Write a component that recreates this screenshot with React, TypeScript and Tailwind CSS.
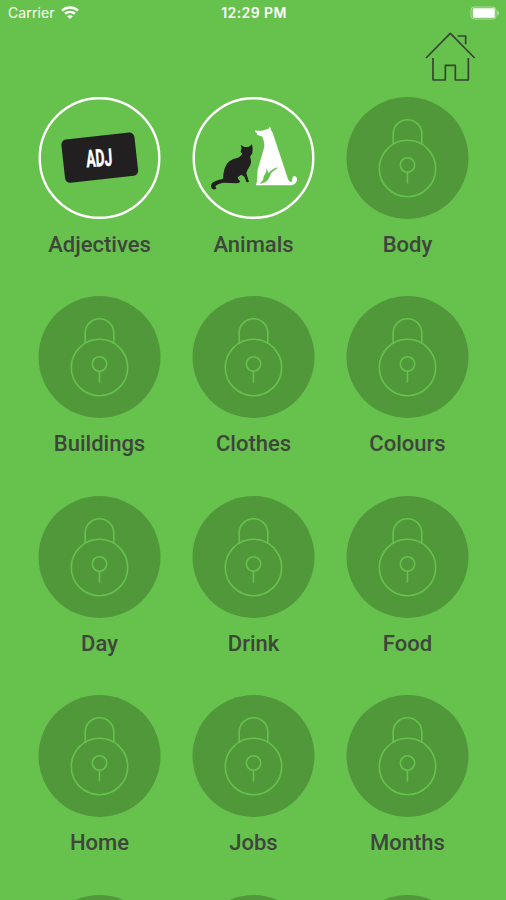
import type { ReactNode } from "react"

type Category = { id: number; name?: string; icon?: ReactNode }

const categories: Category[] = [
  { id: 1, name: "Adjectives", icon: <AdjectivesArt /> },
  { id: 2, name: "Animals", icon: <AnimalsArt /> },
  { id: 3, name: "Body" },
  { id: 4, name: "Buildings" },
  { id: 5, name: "Clothes" },
  { id: 6, name: "Colours" },
  { id: 7, name: "Day" },
  { id: 8, name: "Drink" },
  { id: 9, name: "Food" },
  { id: 10, name: "Home" },
  { id: 11, name: "Jobs" },
  { id: 12, name: "Months" },
  { id: 13 },
  { id: 14 },
  { id: 15 },
]

export default function App() {
  return (
    <div className="w-full h-screen overflow-hidden flex flex-col bg-[#66c24c] font-['Roboto',sans-serif]">
      <StatusBar />
      <header className="h-[71px] shrink-0 flex justify-end pr-[28px] pt-[4px]">
        <button aria-label="Home" className="w-[54px] h-[54px]">
          <HomeIcon />
        </button>
      </header>
      <main className="grid grid-cols-3 auto-rows-[199.4px] px-[22px]">
        {categories.map((c) => (
          <Tile key={c.id} category={c} />
        ))}
      </main>
    </div>
  )
}

function StatusBar() {
  return (
    <div className="h-[26px] shrink-0 grid grid-cols-3 items-center pl-[8px] pr-[6px] text-white font-['Inter',sans-serif] text-[14px] leading-none">
      <div className="flex items-center gap-[6px]">
        <span className="tracking-[0.1px]">Carrier</span>
        <svg viewBox="0 0 18 13" className="w-[18px] h-[13px] -mt-[2px]" fill="none" stroke="currentColor" strokeWidth="2.5">
          <path d="M1 4.6C5.6.5 12.4.5 17 4.6" />
          <path d="M4 7.8c2.9-2.5 7.1-2.5 10 0" />
          <path d="M6.2 10.2c1.6-1.4 4-1.4 5.6 0L9 13z" fill="currentColor" stroke="none" />
        </svg>
      </div>
      <span className="text-center font-semibold tracking-[0.4px] whitespace-nowrap">12:29 PM</span>
      <svg viewBox="0 0 30 14" className="w-[30px] h-[14px] justify-self-end">
        <rect x="1" y="1" width="25" height="12" rx="3" fill="none" stroke="#fff" strokeOpacity="0.45" />
        <rect x="2.8" y="2.3" width="22" height="9.4" rx="1" fill="#fff" />
        <path d="M27.3 4.6v5c1-.5 1.8-1.3 1.8-2.5s-.8-2-1.8-2.5z" fill="#fff" fillOpacity="0.5" />
      </svg>
    </div>
  )
}

function Tile({ category }: { category: Category }) {
  return (
    <button className="flex flex-col items-center">
      <div className="w-[123px] h-[122px] shrink-0">{category.icon ?? <LockIcon />}</div>
      {category.name && (
        <span className="mt-[12px] pl-px text-[22px] leading-[28px] font-medium text-[#3e463c]">{category.name}</span>
      )}
    </button>
  )
}

function LockIcon() {
  return (
    <svg viewBox="0 0 122 122" className="w-full h-full" fill="none" stroke="#66c24c" strokeWidth="1.6" strokeLinecap="round">
      <circle cx="61" cy="61" r="61" fill="#51983b" stroke="none" />
      <path d="M46.7 46.7V37a14.3 14.3 0 0 1 28.6 0v9.7" />
      <circle cx="61" cy="71.5" r="28.2" />
      <circle cx="61" cy="68" r="7.2" />
      <path d="M61 75.5V86" />
    </svg>
  )
}

function HomeIcon() {
  return (
    <svg viewBox="0 0 162 162" className="w-full h-full" fill="none" stroke="#35452f" strokeWidth="5" strokeLinejoin="round">
      <path d="M6 84L79 10l73 74" />
      <path d="M101 18h24v25" />
      <path d="M27 84v66h37v-44h30v44h39V84" />
    </svg>
  )
}

function AdjectivesArt() {
  return (
    <svg viewBox="0 0 122 122" className="w-full h-full">
      <circle cx="61" cy="61" r="59.8" fill="none" stroke="#fff" strokeWidth="2.4" />
      <rect x="24.5" y="39" width="73.5" height="43.5" rx="5" fill="#221f20" transform="rotate(-6.3 61 60.7)" />
      <text
        transform="translate(61.2 69.3) rotate(-4) scale(0.58 1)"
        textAnchor="middle"
        fontSize="24"
        fill="#fff"
        stroke="#fff"
        strokeWidth="0.4"
        className="font-['Roboto',sans-serif] font-bold"
      >
        ADJ
      </text>
    </svg>
  )
}

function AnimalsArt() {
  return (
    <svg viewBox="0 0 122 122" className="w-full h-full">
      <circle cx="61" cy="61" r="59.8" fill="none" stroke="#fff" strokeWidth="2.4" />
      <g transform="translate(12.5 23) scale(0.3333)">
        {/* cat */}
        <path
          fill="#221f20"
          d="M107 75L118 81L131 81L141 73L143 85L142 100Q138 107 135 110Q142 126 134 139Q127 149 124 160L132 186L125 187L118 170L109 164L98 172Q100 181 106 184Q104 190 95 190L55 188Q39 190 31 198L34 206Q24 212 19 203Q15 190 30 184Q43 178 54 176Q55 149 65 133Q75 119 94 115Q108 111 112 100Q106 98 107 92L110 86Z"
        />
        {/* dog */}
        <path
          fill="#fff"
          d="M150 31Q163 34 177 31Q185 26 191 26L195 19L199 32Q205 38 207 50L249 177Q254 190 262 184Q259 173 268 167Q277 170 276 180Q273 195 258 196L153 196L156 182L158 149L178 80Q179 65 172 50Q164 47 156 44L156 39L151 37Z"
        />
        <path
          fill="#66c24c"
          d="M164 193Q168 185 174 180Q174 167 181 161Q186 154 184 144L191 160Q202 145 219 142Q213 150 205 153Q196 159 195 168Q190 182 181 187Q172 188 164 193Z"
        />
      </g>
    </svg>
  )
}
